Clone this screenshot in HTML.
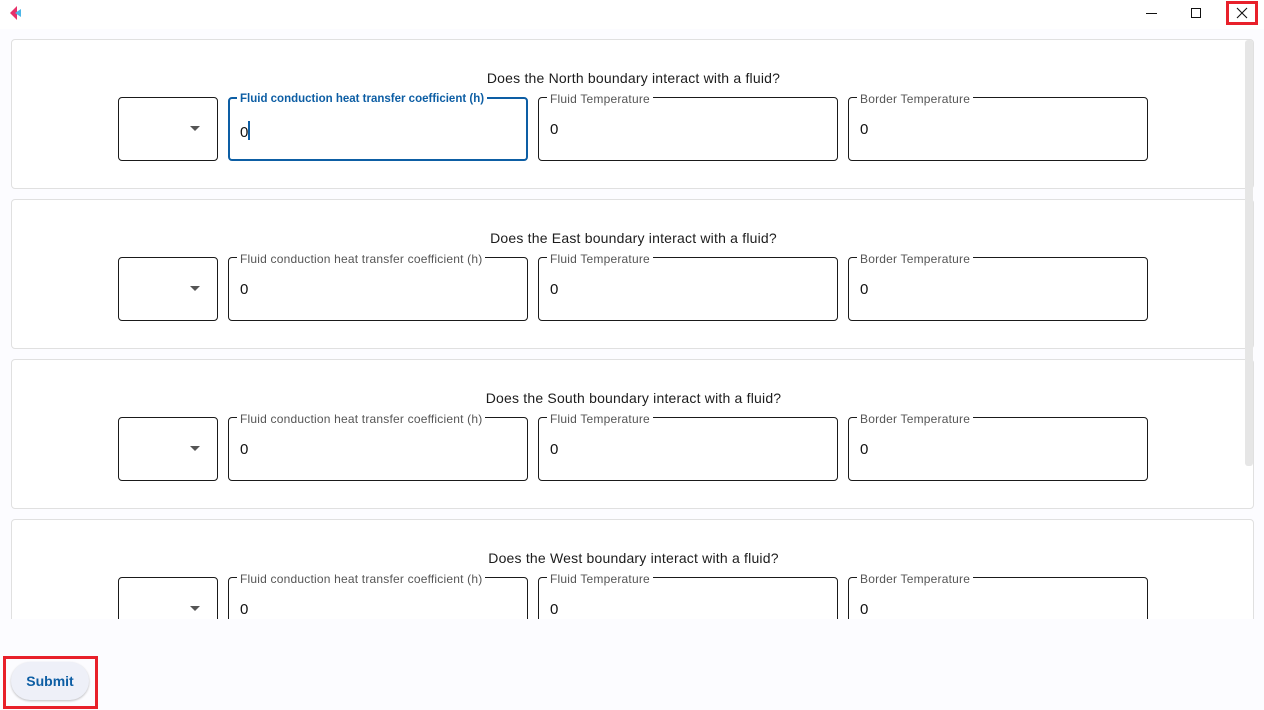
<!DOCTYPE html>
<html><head><style>
*{box-sizing:border-box;margin:0;padding:0}
body{width:1264px;height:710px;background:#fcfcff;font-family:"Liberation Sans",sans-serif;position:relative;overflow:hidden}
.top{position:absolute;left:0;top:0;width:1264px;height:29px;background:#fff}
.main{position:absolute;left:0;top:29px;width:1264px;height:590px;background:#fcfcff;overflow:hidden}
.card{position:absolute;left:11px;width:1243px;height:150px;background:#fff;border:1px solid #e0e0e0;border-radius:4px}
.q{position:absolute;top:30px;left:0;width:1243px;text-align:center;font-size:14px;line-height:16px;color:#1c1c1c;letter-spacing:.2px}
.f{position:absolute;top:57px;height:64px;border:1px solid #1a1a1a;border-radius:4px}
.f .l{position:absolute;top:-6px;left:8px;background:#fff;padding:0 3px;font-size:12px;line-height:14px;color:#555;letter-spacing:.2px}
.f .v{position:absolute;top:23px;left:11px;font-size:15px;color:#111}
.dd{left:106px;width:100px}
.dd:after{content:"";position:absolute;left:71px;top:28px;border:5px solid transparent;border-top:5px solid #555;border-bottom:0}
.a{left:216px;width:300px}.b{left:526px;width:300px}.c{left:836px;width:300px}
.foc{border:2px solid #0d5ea4}.foc .l{color:#0d5ea4;font-weight:bold;top:-7px;left:7px;letter-spacing:0;font-size:11.5px}.foc .v{top:22px;left:10px}
.sb{position:absolute;left:1245px;top:11px;width:8px;height:426px;background:#e6e6e6;border-radius:3px;z-index:5}
</style></head><body>
<div class="top">
<svg style="position:absolute;left:10px;top:6px" width="12" height="14"><polygon points="0,7 7,0 7,14" fill="#e8316b"/><polygon points="5,7 11,3 11,11" fill="#4cb6e8"/></svg>
<div style="position:absolute;left:1146px;top:13px;width:11px;height:1px;background:#111"></div>
<div style="position:absolute;left:1191px;top:8px;width:10px;height:10px;border:1px solid #111"></div>
<div style="position:absolute;left:1226px;top:1px;width:32px;height:24px;border:3px solid #e8202a"></div>
<svg style="position:absolute;left:1236px;top:7px" width="12" height="12"><path d="M1 1L11 11M11 1L1 11" stroke="#111" stroke-width="1.1"/></svg>
</div>
<div class="main">
<div class="card" style="top:10px"><div class="q">Does the North boundary interact with a fluid?</div>
<div class="f dd"></div>
<div class="f a foc"><span class="l">Fluid conduction heat transfer coefficient (h)</span><span class="v">0<span style="display:inline-block;width:2px;height:19px;background:#0d5ea4;vertical-align:-3px"></span></span></div>
<div class="f b"><span class="l">Fluid Temperature</span><span class="v">0</span></div>
<div class="f c"><span class="l">Border Temperature</span><span class="v">0</span></div></div>
<div class="card" style="top:170px"><div class="q">Does the East boundary interact with a fluid?</div>
<div class="f dd"></div>
<div class="f a"><span class="l">Fluid conduction heat transfer coefficient (h)</span><span class="v">0</span></div>
<div class="f b"><span class="l">Fluid Temperature</span><span class="v">0</span></div>
<div class="f c"><span class="l">Border Temperature</span><span class="v">0</span></div></div>
<div class="card" style="top:330px"><div class="q">Does the South boundary interact with a fluid?</div>
<div class="f dd"></div>
<div class="f a"><span class="l">Fluid conduction heat transfer coefficient (h)</span><span class="v">0</span></div>
<div class="f b"><span class="l">Fluid Temperature</span><span class="v">0</span></div>
<div class="f c"><span class="l">Border Temperature</span><span class="v">0</span></div></div>
<div class="card" style="top:490px"><div class="q">Does the West boundary interact with a fluid?</div>
<div class="f dd"></div>
<div class="f a"><span class="l">Fluid conduction heat transfer coefficient (h)</span><span class="v">0</span></div>
<div class="f b"><span class="l">Fluid Temperature</span><span class="v">0</span></div>
<div class="f c"><span class="l">Border Temperature</span><span class="v">0</span></div></div>
<div class="sb"></div>
</div>
<div style="position:absolute;left:3px;top:656px;width:95px;height:53px;border:3px solid #e8202a"></div>
<div style="position:absolute;left:11px;top:662px;width:78px;height:38px;border-radius:19px;background:#eef0f8;box-shadow:0 1px 2px rgba(0,0,0,.25);color:#0d5ea4;font-weight:bold;font-size:14px;text-align:center;line-height:38px">Submit</div>
</body></html>
